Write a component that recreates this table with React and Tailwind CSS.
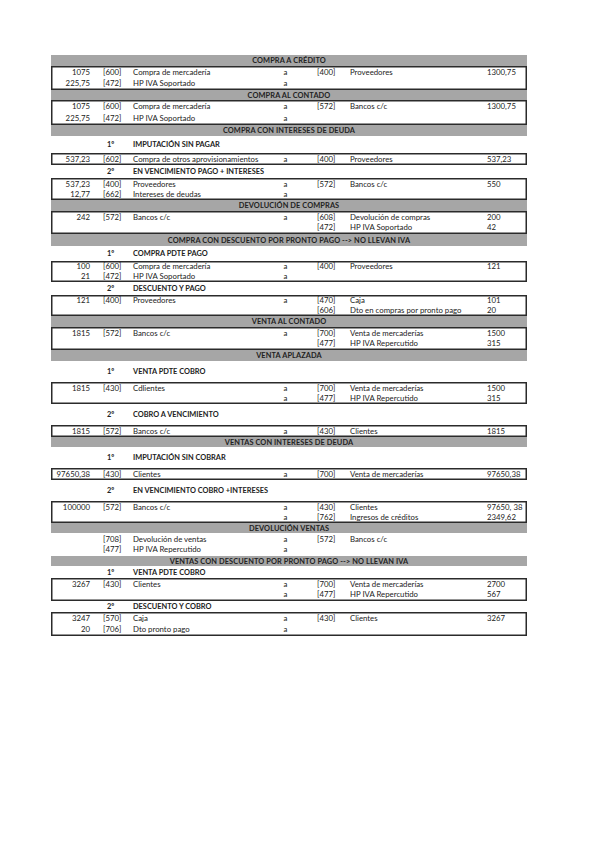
import React from "react";

const COLS = "grid grid-cols-[42px_37px_140px_31px_46px_137px_43px] items-center";

const data = [
  { t: "h", text: "COMPRA A CRÉDITO", cls: "h-[11px]" },
  {
    t: "box",
    cls: "h-[24px]",
    rows: [
      ["1075", "[600]", "Compra de mercadería", "a", "[400]", "Proveedores", "1300,75"],
      ["225,75", "[472]", "HP IVA Soportado", "a", "", "", ""],
    ],
  },
  { t: "h", text: "COMPRA AL CONTADO", cls: "h-[10px]" },
  {
    t: "box",
    cls: "h-[25px]",
    rows: [
      ["1075", "[600]", "Compra de mercadería", "a", "[572]", "Bancos c/c", "1300,75"],
      ["225,75", "[472]", "HP IVA Soportado", "a", "", "", ""],
    ],
  },
  { t: "h", text: "COMPRA CON INTERESES DE DEUDA", cls: "h-[11px]" },
  { t: "s", n: "1º", text: "IMPUTACIÓN SIN PAGAR", cls: "h-[17px]" },
  {
    t: "box",
    cls: "h-[12px]",
    rows: [["537,23", "[602]", "Compra de otros aprovisionamientos", "a", "[400]", "Proveedores", "537,23"]],
  },
  { t: "s", n: "2º", text: "EN VENCIMIENTO PAGO + INTERESES", cls: "h-[13px]" },
  {
    t: "box",
    cls: "h-[22px]",
    rows: [
      ["537,23", "[400]", "Proveedores", "a", "[572]", "Bancos c/c", "550"],
      ["12,77", "[662]", "Intereses de deudas", "a", "", "", ""],
    ],
  },
  { t: "h", text: "DEVOLUCIÓN DE COMPRAS", cls: "h-[11px]" },
  {
    t: "box",
    cls: "h-[23px]",
    rows: [
      ["242", "[572]", "Bancos c/c", "a", "[608]", "Devolución de compras", "200"],
      ["", "", "", "", "[472]", "HP IVA Soportado", "42"],
    ],
  },
  { t: "h", text: "COMPRA CON DESCUENTO POR PRONTO PAGO --> NO LLEVAN IVA", cls: "h-[12px]" },
  { t: "s", n: "1º", text: "COMPRA PDTE PAGO", cls: "h-[15px]" },
  {
    t: "box",
    cls: "h-[21px]",
    rows: [
      ["100", "[600]", "Compra de mercadería", "a", "[400]", "Proveedores", "121"],
      ["21", "[472]", "HP IVA Soportado", "a", "", "", ""],
    ],
  },
  { t: "s", n: "2º", text: "DESCUENTO Y PAGO", cls: "h-[13px]" },
  {
    t: "box",
    cls: "h-[21px]",
    rows: [
      ["121", "[400]", "Proveedores", "a", "[470]", "Caja", "101"],
      ["", "", "", "", "[606]", "Dto en compras por pronto pago", "20"],
    ],
  },
  { t: "h", text: "VENTA AL CONTADO", cls: "h-[11px]" },
  {
    t: "box",
    cls: "h-[23px]",
    rows: [
      ["1815", "[572]", "Bancos c/c", "a", "[700]", "Venta de mercaderías", "1500"],
      ["", "", "", "", "[477]", "HP IVA Repercutido", "315"],
    ],
  },
  { t: "h", text: "VENTA APLAZADA", cls: "h-[11px]" },
  { t: "s", n: "1º", text: "VENTA PDTE COBRO", cls: "h-[21px]" },
  {
    t: "box",
    cls: "h-[22px]",
    rows: [
      ["1815", "[430]", "Cdlientes", "a", "[700]", "Venta de mercaderías", "1500"],
      ["", "", "", "a", "[477]", "HP IVA Repercutido", "315"],
    ],
  },
  { t: "s", n: "2º", text: "COBRO A VENCIMIENTO", cls: "h-[21px]" },
  {
    t: "box",
    cls: "h-[12px]",
    rows: [["1815", "[572]", "Bancos c/c", "a", "[430]", "Clientes", "1815"]],
  },
  { t: "h", text: "VENTAS CON INTERESES DE DEUDA", cls: "h-[10px]" },
  { t: "s", n: "1º", text: "IMPUTACIÓN SIN COBRAR", cls: "h-[21px]" },
  {
    t: "box",
    cls: "h-[12px]",
    rows: [["97650,38", "[430]", "Clientes", "a", "[700]", "Venta de mercaderías", "97650,38"]],
  },
  { t: "s", n: "2º", text: "EN VENCIMIENTO COBRO +INTERESES", cls: "h-[21px]" },
  {
    t: "box",
    cls: "h-[22px]",
    rows: [
      ["100000", "[572]", "Bancos c/c", "a", "[430]", "Clientes", "97650, 38"],
      ["", "", "", "a", "[762]", "Ingresos de créditos", "2349,62"],
    ],
  },
  { t: "h", text: "DEVOLUCIÓN VENTAS", cls: "h-[10px]" },
  {
    t: "plain",
    cls: "h-[23px]",
    rows: [
      ["", "[708]", "Devolución de ventas", "a", "[572]", "Bancos c/c", ""],
      ["", "[477]", "HP IVA Repercutido", "a", "", "", ""],
    ],
  },
  { t: "h", text: "VENTAS CON DESCUENTO POR PRONTO PAGO --> NO LLEVAN IVA", cls: "h-[10px]" },
  { t: "s", n: "1º", text: "VENTA PDTE COBRO", cls: "h-[12px]" },
  {
    t: "box",
    cls: "h-[23px]",
    rows: [
      ["3267", "[430]", "Clientes", "a", "[700]", "Venta de mercaderías", "2700"],
      ["", "", "", "a", "[477]", "HP IVA Repercutido", "567"],
    ],
  },
  { t: "s", n: "2º", text: "DESCUENTO Y COBRO", cls: "h-[11px]" },
  {
    t: "box",
    cls: "h-[24px]",
    rows: [
      ["3247", "[570]", "Caja", "a", "[430]", "Clientes", "3267"],
      ["20", "[706]", "Dto pronto pago", "a", "", "", ""],
    ],
  },
];

function Row({ r }) {
  return (
    <div className={`${COLS} flex-1 min-h-0 pt-[1px]`}>
      <div className="text-right pr-[3px] whitespace-nowrap">{r[0]}</div>
      <div className="pl-[10px] whitespace-nowrap">{r[1]}</div>
      <div className="pl-[3px] whitespace-nowrap">{r[2]}</div>
      <div className="text-center">{r[3]}</div>
      <div className="pl-[16px] whitespace-nowrap">{r[4]}</div>
      <div className="pl-[3px] whitespace-nowrap">{r[5]}</div>
      <div className="pl-[3px] whitespace-nowrap">{r[6]}</div>
    </div>
  );
}

function Item({ it }) {
  if (it.t === "h") {
    return (
      <div className={`${it.cls} bg-[#a6a6a6] flex items-center justify-center pt-[1px] font-bold text-[7.4px] tracking-[0.1px]`}>
        {it.text}
      </div>
    );
  }
  if (it.t === "s") {
    return (
      <div className={`${it.cls} ${COLS} pt-[1px] font-bold text-[7.4px]`}>
        <div />
        <div className="pl-[14px]">{it.n}</div>
        <div className="pl-[3px] whitespace-nowrap col-span-5">{it.text}</div>
      </div>
    );
  }
  const boxed = it.t === "box";
  return (
    <div
      className={`${it.cls} flex flex-col py-[1px] ${
        boxed ? "shadow-[inset_0_0_0_1.5px_#2b2b2b]" : ""
      }`}
    >
      {it.rows.map((r, i) => (
        <Row key={i} r={r} />
      ))}
    </div>
  );
}

export default function App() {
  return (
    <div className="w-[599px] h-[848px] bg-white pt-[55px] pl-[51px] text-[#222] font-['Lato',_'Liberation_Sans',_sans-serif] text-[7.8px] leading-none">
      <div className="w-[476px] flex flex-col">
        {data.map((it, i) => (
          <Item key={i} it={it} />
        ))}
      </div>
    </div>
  );
}
